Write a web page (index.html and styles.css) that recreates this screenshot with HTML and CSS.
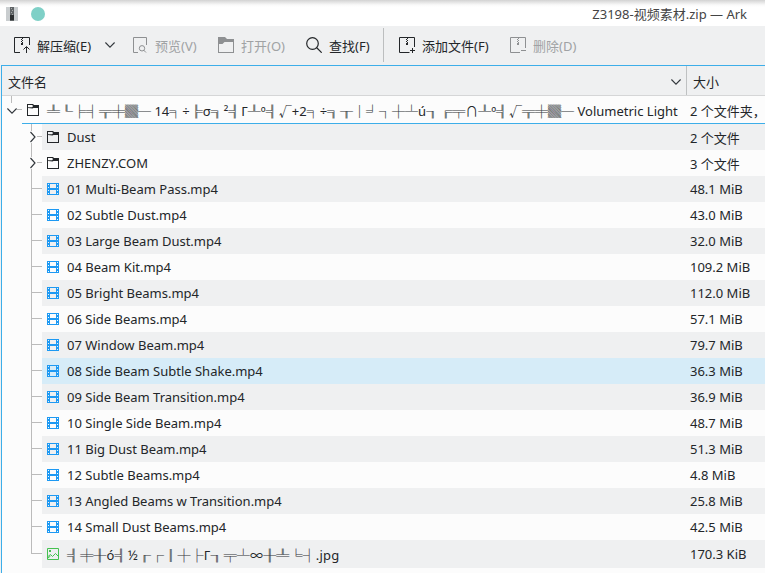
FILE: index.html
```html
<!DOCTYPE html>
<html lang="zh-CN">
<head>
<meta charset="utf-8">
<title>Z3198-视频素材.zip — Ark</title>
<link rel="stylesheet" href="styles.css">
</head>
<body>
<svg class="defs" aria-hidden="true">
  <symbol id="folder" viewBox="0 0 12 12"><path d="M0 0h6l1 1h5v11H0zM1 4v7h10V4H6.5L5.5 4.5z M1 1v2.2h4L6 2.2 5.3 1z" fill="currentColor" fill-rule="evenodd"/></symbol>
  <symbol id="film" viewBox="0 0 12 12"><path fill="#1d99f3" fill-rule="evenodd" d="M0 0h12v12H0zM3 1v4h6V1zM3 7v4h6V7zM1 1v1h1V1zM1 4v1h1V4zM1 7v1h1V7zM1 10v1h1v-1zM10 1v1h1V1zM10 4v1h1V4zM10 7v1h1V7zM10 10v1h1v-1z"/></symbol>
  <symbol id="image" viewBox="0 0 12 12"><path d="M.5.5h11v11H.5z M1 8.5l2.5-2 2 2 3-3 3 3M1 10l2.5-2" fill="none" stroke="#45c150"/><path d="M2 2h2v2H2z" fill="#45c150"/></symbol>
  <symbol id="right" viewBox="0 0 6 12"><path d="M.5 1 5 6 .5 11" fill="none" stroke="#31363b" stroke-width="1.15"/></symbol>
  <symbol id="down" viewBox="0 0 10 6"><path d="M.4.5 5 5.100 9.600.5" fill="none" stroke="#31363b" stroke-width="1.1"/></symbol>
</svg>

<header class="titlebar">
  <svg class="app" viewBox="0 0 12 14"><path d="M0 0h12v14H0z" fill="#c9cdcf"/><path d="M4 0h4v14H4z" fill="#606466"/><path d="M5 1h1v1H5zM6 3h1v1H6zM5 5h1v1H5zM6 7h1v1H6z" fill="#a5a8a9"/><path d="M4 8h4v5H4z" fill="#2c2f30"/></svg>
  <span class="dot"></span>
  <h1>Z3198-视频素材.zip — Ark</h1>
</header>

<nav class="toolbar">
  <button class="extract"><svg viewBox="0 0 16 16"><path d="M6 15.5H.5V.5h15V8M12.5 16v-6M9.5 12.5l3-3 3 3" fill="none" stroke="currentColor"/><path d="M8 1h1v1H8zM7 2h1v1H7zM8 3h1v1H8zM7 4h1v1H7zM8 5h1v1H8zM7 6h2v2H7z" fill="currentColor"/></svg><span>解压缩(E)</span><svg class="menu-arrow"><use href="#down"/></svg></button>
  <button class="preview" disabled><svg viewBox="0 0 16 16"><path d="M6 15.5H1.500V.5h13V8M14 15.500l-2.500-2.500" fill="none" stroke="currentColor"/><circle cx="10" cy="11.300" r="2.700" fill="none" stroke="currentColor"/></svg><span>预览(V)</span></button>
  <button class="open" disabled><svg viewBox="0 0 16 16"><path fill="currentColor" fill-rule="evenodd" d="M0 0h7l2 2h7v14H0zM1 7v8h14V5H6.500L4.500 7z"/></svg><span>打开(O)</span></button>
  <button class="find"><svg viewBox="0 0 16 16"><circle cx="6.500" cy="6.500" r="5.800" fill="none" stroke="currentColor" stroke-width="1.200"/><path d="m10.500 10.500 5.200 5.200" stroke="currentColor" stroke-width="1.200"/></svg><span>查找(F)</span></button>
  <button class="add"><svg viewBox="0 0 16 16"><path d="M10.500 15.500H.5V.5h15V10M13.500 11v5M11 13.500h5" fill="none" stroke="currentColor"/><path d="M8 1h1v1H8zM7 2h1v1H7zM8 3h1v1H8zM7 4h1v1H7zM8 5h1v1H8zM7 6h2v2H7z" fill="currentColor"/></svg><span>添加文件(F)</span></button>
  <button class="remove" disabled><svg viewBox="0 0 16 16"><path d="M10 15.500H.5V.5h15V11M11 13.500h5" fill="none" stroke="currentColor"/><path d="M8 1h1v1H8zM7 2h1v1H7zM8 3h1v1H8zM7 4h1v1H7zM8 5h1v1H8zM7 6h2v2H7z" fill="currentColor"/></svg><span>删除(D)</span></button>
</nav>

<main class="tree">
  <div class="head"><div class="col-name"><span>文件名</span><svg class="sort"><use href="#down"/></svg></div><div class="col-size">大小</div></div>
  <div class="row root"><div class="branch"><svg><use href="#down"/></svg></div><div class="cell"><svg class="icon"><use href="#folder"/></svg><span class="name"><span class="box">╩╙╞╡╦╪▓─</span> 14<span class="box">╕</span>÷<span class="box">╠</span>σ<span class="box">╗</span>²<span class="box">╣</span>Γ<span class="box">╨</span>º<span class="box">╣</span>√+2<span class="box">╕</span>÷<span class="box">╗╥│╛┐┼┴</span>ú<span class="box">╖╔╤</span>∩<span class="box">╨</span>º<span class="box">╣</span>√<span class="box">╦╪▓─</span> Volumetric Light</span><span class="size">2 个文件夹，</span></div></div>
  <div class="row dir"><div class="branch"><svg><use href="#right"/></svg></div><div class="cell"><svg class="icon"><use href="#folder"/></svg><span class="name">Dust</span><span class="size">2 个文件</span></div></div>
  <div class="row dir"><div class="branch"><svg><use href="#right"/></svg></div><div class="cell"><svg class="icon"><use href="#folder"/></svg><span class="name">ZHENZY.COM</span><span class="size">3 个文件</span></div></div>
  <div class="row"><div class="branch"></div><div class="cell"><svg class="icon"><use href="#film"/></svg><span class="name">01 Multi-Beam Pass.mp4</span><span class="size">48.1 MiB</span></div></div>
  <div class="row"><div class="branch"></div><div class="cell"><svg class="icon"><use href="#film"/></svg><span class="name">02 Subtle Dust.mp4</span><span class="size">43.0 MiB</span></div></div>
  <div class="row"><div class="branch"></div><div class="cell"><svg class="icon"><use href="#film"/></svg><span class="name">03 Large Beam Dust.mp4</span><span class="size">32.0 MiB</span></div></div>
  <div class="row"><div class="branch"></div><div class="cell"><svg class="icon"><use href="#film"/></svg><span class="name">04 Beam Kit.mp4</span><span class="size">109.2 MiB</span></div></div>
  <div class="row"><div class="branch"></div><div class="cell"><svg class="icon"><use href="#film"/></svg><span class="name">05 Bright Beams.mp4</span><span class="size">112.0 MiB</span></div></div>
  <div class="row"><div class="branch"></div><div class="cell"><svg class="icon"><use href="#film"/></svg><span class="name">06 Side Beams.mp4</span><span class="size">57.1 MiB</span></div></div>
  <div class="row"><div class="branch"></div><div class="cell"><svg class="icon"><use href="#film"/></svg><span class="name">07 Window Beam.mp4</span><span class="size">79.7 MiB</span></div></div>
  <div class="row selected"><div class="branch"></div><div class="cell"><svg class="icon"><use href="#film"/></svg><span class="name">08 Side Beam Subtle Shake.mp4</span><span class="size">36.3 MiB</span></div></div>
  <div class="row"><div class="branch"></div><div class="cell"><svg class="icon"><use href="#film"/></svg><span class="name">09 Side Beam Transition.mp4</span><span class="size">36.9 MiB</span></div></div>
  <div class="row"><div class="branch"></div><div class="cell"><svg class="icon"><use href="#film"/></svg><span class="name">10 Single Side Beam.mp4</span><span class="size">48.7 MiB</span></div></div>
  <div class="row"><div class="branch"></div><div class="cell"><svg class="icon"><use href="#film"/></svg><span class="name">11 Big Dust Beam.mp4</span><span class="size">51.3 MiB</span></div></div>
  <div class="row"><div class="branch"></div><div class="cell"><svg class="icon"><use href="#film"/></svg><span class="name">12 Subtle Beams.mp4</span><span class="size">4.8 MiB</span></div></div>
  <div class="row"><div class="branch"></div><div class="cell"><svg class="icon"><use href="#film"/></svg><span class="name">13 Angled Beams w Transition.mp4</span><span class="size">25.8 MiB</span></div></div>
  <div class="row"><div class="branch"></div><div class="cell"><svg class="icon"><use href="#film"/></svg><span class="name">14 Small Dust Beams.mp4</span><span class="size">42.5 MiB</span></div></div>
  <div class="row last"><div class="branch"></div><div class="cell"><svg class="icon"><use href="#image"/></svg><span class="name"><span class="box">╣╪╫</span>ó<span class="box">╣</span>½<span class="box">╓┌║┼├</span>Γ<span class="box">╖╤┴</span>∞<span class="box">╫╩╘┤</span>.jpg</span><span class="size">170.3 KiB</span></div></div>
</main>
</body>
</html>
```
FILE: styles.css
```css
* { box-sizing: border-box; }
body {
  margin: 0;
  width: 765px;
  height: 573px;
  overflow: hidden;
  display: flex;
  flex-direction: column;
  background: #eff0f1;
  color: #232629;
  font: 13px/20px "Noto Sans", "Noto Sans CJK SC", sans-serif;
}
svg { display: block; flex: none; }
.defs { width: 0; height: 0; position: absolute; }

.titlebar {
  height: 26px;
  flex: none;
  display: flex;
  align-items: center;
  padding: 2px 18px 0 6px;
  background: linear-gradient(#d2d2d2, #e3e3e3 2px, #fafafa 5px, #fff 7px);
}
.app { width: 12px; height: 14px; }
.dot { width: 14px; height: 14px; margin-left: 13px; border-radius: 50%; background: #7fd0c7; }
h1 { margin: 0 0 0 auto; font: inherit; color: #444; }

.toolbar { height: 39px; flex: none; display: flex; padding: 0 14px; }
.toolbar button {
  display: flex;
  align-items: center;
  gap: 7px;
  flex: none;
  padding: 0 0 1px;
  border: 0;
  background: none;
  color: #232629;
  font: inherit;
  white-space: nowrap;
}
.toolbar button > span { padding-top: 1px; }
.toolbar button:disabled { color: #a0a2a4; }
.toolbar button > svg { width: 16px; height: 16px; }
.toolbar button:disabled > svg { color: #8e9092; }
.toolbar button > .menu-arrow { width: 10px; height: 6px; margin-left: 7px; }
.toolbar .preview { width: 86px; }
.toolbar .extract { width: 118px; }
.toolbar .open { width: 88px; }
.toolbar .find { width: 79px; }
.toolbar .add { width: 125px; padding-left: 14px; }
.toolbar .add::before { content: ""; align-self: center; width: 1px; height: 34px; margin: 0 8px 0 -16px; background: #bcbebf; }

.tree {
  flex: 1;
  min-height: 0;
  margin-left: 1px;
  border: 1px solid #3daee9;
  border-width: 1px 0 0 1px;
  background: #fcfcfc;
}
.head { height: 30px; display: flex; background: #eff0f1; border-bottom: 1px solid #d5d6d7; }
.col-name { width: 685px; padding: 2px 5px 0 6px; display: flex; align-items: center; justify-content: space-between; border-right: 1px solid #bfc1c2; }
.col-size { padding: 2px 0 0 6px; display: flex; align-items: center; }
.sort { width: 10px; height: 6px; }

.row { height: 26px; display: flex; }
.branch {
  width: 40px;
  flex: none;
  padding-left: 29px;
  background:
    linear-gradient(#bbb, #bbb) 29px 0 / 1px 100% no-repeat,
    linear-gradient(#bbb, #bbb) 29px 12px / 11px 1px no-repeat;
}
.cell { flex: 1; min-width: 0; display: flex; align-items: center; padding-left: 5px; }
.row:nth-child(odd) .cell { background: #eff0f1; }
.row.selected .cell { background: #d6ecf8; }
.icon { width: 12px; height: 12px; margin-right: 8px; }
.name { width: 623px; flex: none; white-space: nowrap; }
.size { white-space: nowrap; }
.box { color: #33363a; -webkit-text-stroke: 0.12px currentColor; }

.dir .branch {
  background:
    linear-gradient(#bbb, #bbb) 29px 0 / 1px 7px no-repeat,
    linear-gradient(#bbb, #bbb) 29px 19px / 1px 7px no-repeat,
    linear-gradient(#bbb, #bbb) 35px 12px / 5px 1px no-repeat;
}
.dir .branch svg { width: 6px; height: 12px; margin-top: 7px; margin-left: -1px; }
.dir .size { padding-top: 2px; }
.row.root { height: 28px; }
.root .branch {
  width: 20px;
  padding: 12px 0 0 5px;
  background:
    linear-gradient(#bbb, #bbb) 9px 0 / 1px 7px no-repeat,
    linear-gradient(#bbb, #bbb) 15px 13px / 5px 1px no-repeat;
}
.root .branch svg { width: 10px; height: 6px; }
.root .cell { border-bottom: 1px solid #3daee9; }
.root .name { width: 643px; padding-top: 2px; }
.root .size { padding-top: 2px; }
.row.last { height: 28px; }
.last .name { padding-top: 2px; letter-spacing: 0.17px; }
.last .branch {
  background:
    linear-gradient(#bbb, #bbb) 29px 0 / 1px 13px no-repeat,
    linear-gradient(#bbb, #bbb) 29px 13px / 11px 1px no-repeat;
}
```
